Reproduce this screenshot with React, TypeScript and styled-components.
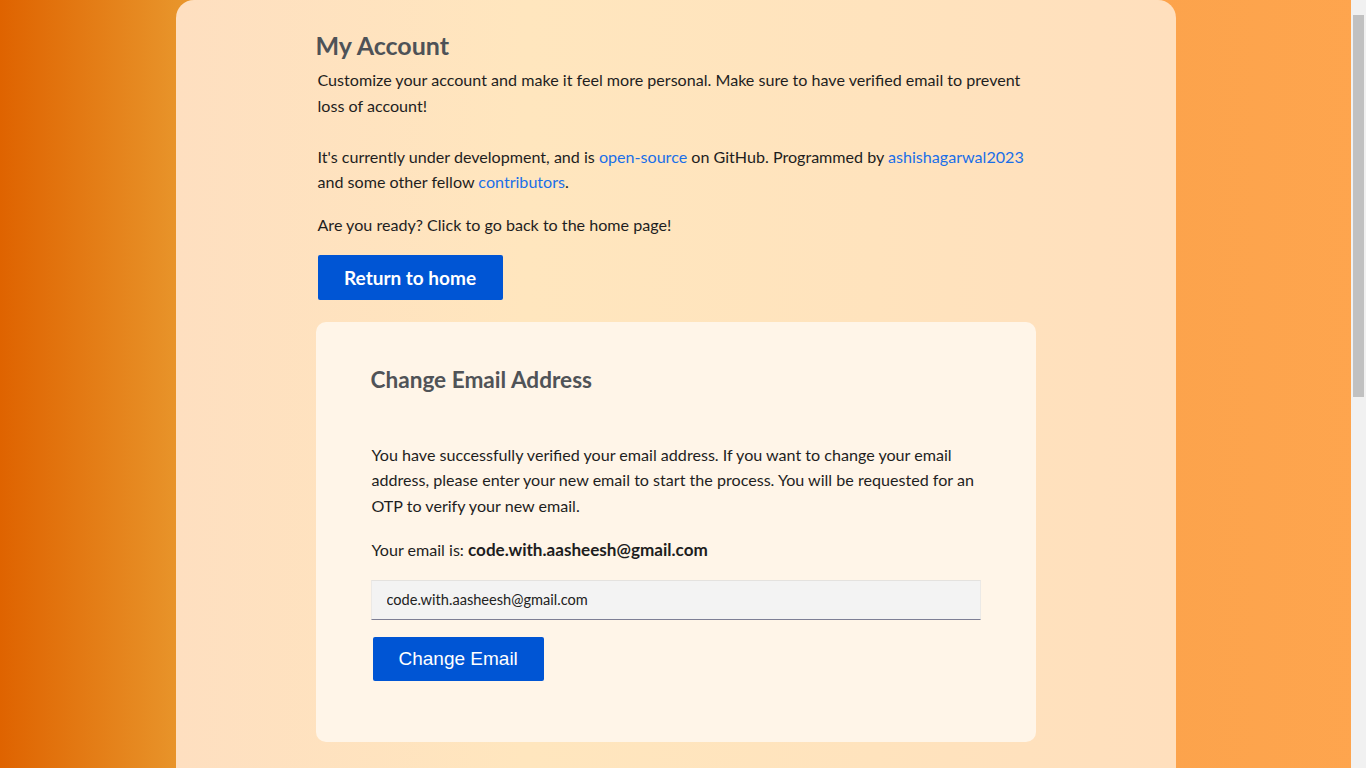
import React from 'react';
import styled, { createGlobalStyle } from 'styled-components';

const GlobalStyle = createGlobalStyle`
  html, body {
    margin: 0;
    padding: 0;
  }
  body {
    min-height: 100vh;
    padding-right: 15px;
    background:
      linear-gradient(#c1c1c1, #c1c1c1) right 2px top 15px / 11px 382px no-repeat fixed,
      linear-gradient(#f1f1f1, #f1f1f1) right top / 15px 100% no-repeat fixed,
      linear-gradient(90deg, #df6300 0%, #e8942a 13%, #f9a048 60%, #fea54e 100%);
    font-family: Lato, 'Noto Sans', sans-serif;
    color: #1e1e1e;
  }
`;

const Page = styled.main`
  width: 1000px;
  margin: 0 auto;
  box-sizing: border-box;
  padding: 30px 140px 48px;
  border-radius: 18px 18px 0 0;
  background: linear-gradient(90deg, #fedfc0 0%, #ffe6be 35%, #ffe3bd 70%, #ffdfbd 100%);
`;

const Title = styled.h1`
  margin: 0 0 6px;
  font-size: 25px;
  line-height: 31px;
  font-weight: 700;
  color: #4e5257;
`;

const Intro = styled.div`
  padding-left: 2px;
`;

const Text = styled.p<{ $gap?: number }>`
  margin: 0 0 ${({ $gap }) => $gap ?? 17}px;
  font-size: 16.1px;
  line-height: 25.6px;

  b {
    font-size: 17.1px;
    font-weight: 700;
  }
`;

const Link = styled.a`
  color: #1a6fe8;
  text-decoration: none;
  cursor: pointer;
`;

const PrimaryButton = styled.button<{ $arial?: boolean }>`
  display: inline-flex;
  align-items: center;
  justify-content: center;
  border: none;
  border-radius: 2px;
  background: #0055d4;
  color: #fff;
  cursor: pointer;
  font-family: ${({ $arial }) => ($arial ? "'Liberation Sans', Arial, sans-serif" : "Lato, 'Noto Sans', sans-serif")};
  font-weight: ${({ $arial }) => ($arial ? 400 : 700)};
  font-size: 19px;
  height: ${({ $arial }) => ($arial ? '44px' : '45px')};
  padding: 0 ${({ $arial }) => ($arial ? '26px' : '26.5px')};
`;

const Card = styled.section`
  margin-top: 22px;
  padding: 44px 55px 61px;
  border-radius: 10px;
  background: #fff5e8;
`;

const CardTitle = styled.h2`
  margin: 0 0 49px;
  font-size: 22.6px;
  line-height: 27px;
  font-weight: 700;
  color: #505357;
`;

const CardText = styled(Text)`
  padding-left: 1px;
`;

const EmailInput = styled.input`
  display: block;
  width: 100%;
  box-sizing: border-box;
  height: 40px;
  margin: 0 0 17px;
  padding: 0 15px;
  border: none;
  border-top: 1px solid #e4e2df;
  border-left: 1px solid #ebe9e6;
  border-right: 1px solid #ebe9e6;
  border-bottom: 1px solid #7d7f95;
  background: #f3f3f3;
  font-family: Lato, 'Noto Sans', sans-serif;
  font-size: 14.6px;
  color: #222;
  outline: none;
`;

const ButtonRow = styled.div`
  padding-left: 2px;
`;

export default function App() {
  return (
    <>
      <GlobalStyle />
      <Page>
        <Title>My Account</Title>
        <Intro>
          <Text>
            Customize your account and make it feel more personal. Make sure to have verified email to prevent loss of account!
            <br />
            <br />
            It's currently under development, and is <Link>open-source</Link> on GitHub. Programmed by{' '}
            <Link>ashishagarwal2023</Link> and some other fellow <Link>contributors</Link>.
          </Text>
          <Text>Are you ready? Click to go back to the home page!</Text>
          <PrimaryButton>Return to home</PrimaryButton>
        </Intro>
        <Card>
          <CardTitle>Change Email Address</CardTitle>
          <CardText $gap={19}>
            You have successfully verified your email address. If you want to change your email address, please enter your new
            email to start the process. You will be requested for an OTP to verify your new email.
          </CardText>
          <CardText>
            Your email is: <b>code.with.aasheesh@gmail.com</b>
          </CardText>
          <EmailInput type="email" defaultValue="code.with.aasheesh@gmail.com" />
          <ButtonRow>
            <PrimaryButton $arial>Change Email</PrimaryButton>
          </ButtonRow>
        </Card>
      </Page>
    </>
  );
}
